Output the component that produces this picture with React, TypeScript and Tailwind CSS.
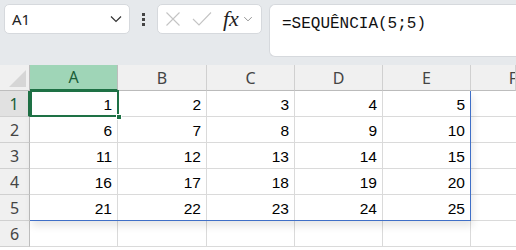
import React from 'react';

// Excel-like sheet with a spilled SEQUENCE result
const COLS = ['A', 'B', 'C', 'D', 'E'];
const ROWS = [1, 2, 3, 4, 5, 6];

const Chevron = ({ className }: { className?: string }) => (
  <svg viewBox="0 0 12 8" className={className} fill="none" stroke="currentColor" strokeWidth={1.2}>
    <path d="M1 1.5 L6 6.5 L11 1.5" />
  </svg>
);

const Toolbar = () => (
  <div className="flex h-[65px] items-start bg-[#e6e9ec] pl-[4px] pt-[4px]">
    {/* name box */}
    <div className="flex h-[30px] w-[126px] items-center justify-between rounded-[5px] border border-[#d6d9dd] bg-white pl-[7px] pr-[7px]">
      <span className="font-['Noto_Sans',sans-serif] text-[15px] text-[#222]">A1</span>
      <Chevron className="h-[8px] w-[12px] text-[#333]" />
    </div>
    {/* dots */}
    <div className="flex h-[30px] w-[27px] flex-col items-center justify-center gap-[2px]">
      <span className="h-[3px] w-[3px] bg-[#444]" />
      <span className="h-[3px] w-[3px] bg-[#444]" />
      <span className="h-[3px] w-[3px] bg-[#444]" />
    </div>
    {/* cancel / enter / fx */}
    <div className="flex h-[30px] w-[105px] items-center rounded-[5px] border border-[#d6d9dd] bg-white pl-[7px]">
      <svg viewBox="0 0 16 16" className="h-[16px] w-[16px]" fill="none" stroke="#c4c4c4" strokeWidth={1.1}>
        <path d="M1.5 1.5 L14.5 14.5 M14.5 1.5 L1.5 14.5" />
      </svg>
      <svg viewBox="0 0 20 16" className="ml-[11px] h-[16px] w-[20px]" fill="none" stroke="#c4c4c4" strokeWidth={1.1}>
        <path d="M1 8 L7 14 L19 1.5" />
      </svg>
      <span className="ml-[11px] font-['Liberation_Serif',serif] text-[22px] italic leading-none text-[#222]">fx</span>
      <Chevron className="ml-[4px] h-[6px] w-[10px] text-[#888]" />
    </div>
    {/* formula bar */}
    <div className="ml-[7px] h-[53px] flex-1 rounded-l-[6px] border border-r-0 border-[#d6d9dd] bg-white pl-[12px] pt-[5px]">
      <span className="font-['Liberation_Mono',monospace] text-[16px] text-[#111]">=SEQUÊNCIA(5;5)</span>
    </div>
  </div>
);

export default function App() {
  const widths = [88, 89, 88, 88, 88];
  return (
    <div className="h-[250px] w-[516px] overflow-hidden bg-white">
      <Toolbar />
      <div className="relative">
        <div className="grid grid-cols-[30px_88px_89px_88px_88px_88px_1fr] grid-rows-[26px_repeat(6,26px)]">
          {/* corner */}
          <div className="relative border-b border-r border-[#bdbdbd] bg-[#f0f0f0]">
            <svg viewBox="0 0 20 20" className="absolute bottom-[3px] right-[3px] h-[17px] w-[17px]">
              <path d="M20 0 L20 20 L0 20 Z" fill="#d6d6d6" />
            </svg>
          </div>
          {[...COLS, 'F'].map((c) => (
            <div
              key={c}
              className={
                c === 'A'
                  ? 'flex items-center justify-center border-b-2 border-r border-b-[#1e7145] border-r-[#bdbdbd] bg-[#9fd5b7] font-["Noto_Sans",sans-serif] text-[16px] text-[#1a5e37]'
                  : 'flex items-center justify-center overflow-hidden border-b border-r border-[#d0d0d0] border-b-[#bdbdbd] bg-[#f0f0f0] font-["Noto_Sans",sans-serif] text-[16px] text-[#444]'
              }
            >
              {c === 'F' ? <span className="-mr-[40px]">F</span> : c}
            </div>
          ))}
          {ROWS.map((r) => (
            <React.Fragment key={r}>
              <div
                className={
                  r === 1
                    ? 'flex items-center justify-center border-b border-r-2 border-b-[#d0d0d0] border-r-[#1e7145] bg-[#e1e1e1] font-["Noto_Sans",sans-serif] text-[16px] text-[#1a5e37]'
                    : 'flex items-center justify-center border-b border-r border-b-[#d0d0d0] border-r-[#bdbdbd] bg-[#f0f0f0] font-["Noto_Sans",sans-serif] text-[16px] text-[#444]'
                }
              >
                {r}
              </div>
              {widths.map((_, i) => (
                <div
                  key={i}
                  className="flex items-center justify-end border-b border-r border-[#dadada] pr-[5px] pt-[2px] font-['Liberation_Sans',Arial,sans-serif] text-[15.5px] text-black"
                >
                  {r <= 5 ? (r - 1) * 5 + i + 1 : ''}
                </div>
              ))}
              <div className="border-b border-[#dadada]" />
            </React.Fragment>
          ))}
        </div>
        {/* spill range outline */}
        <div className="pointer-events-none absolute left-[30px] top-[26px] h-[130px] w-[441px] border-b border-r border-[#3f6fc7] shadow-[2px_5px_8px_rgba(0,0,0,0.10)]" />
        {/* active cell */}
        <div className="pointer-events-none absolute left-[30px] top-[25px] h-[27px] w-[89px] border-2 border-[#1e7145]" />
        <div className="pointer-events-none absolute left-[116px] top-[49px] h-[6px] w-[6px] border border-white bg-[#1e7145]" />
      </div>
    </div>
  );
}
